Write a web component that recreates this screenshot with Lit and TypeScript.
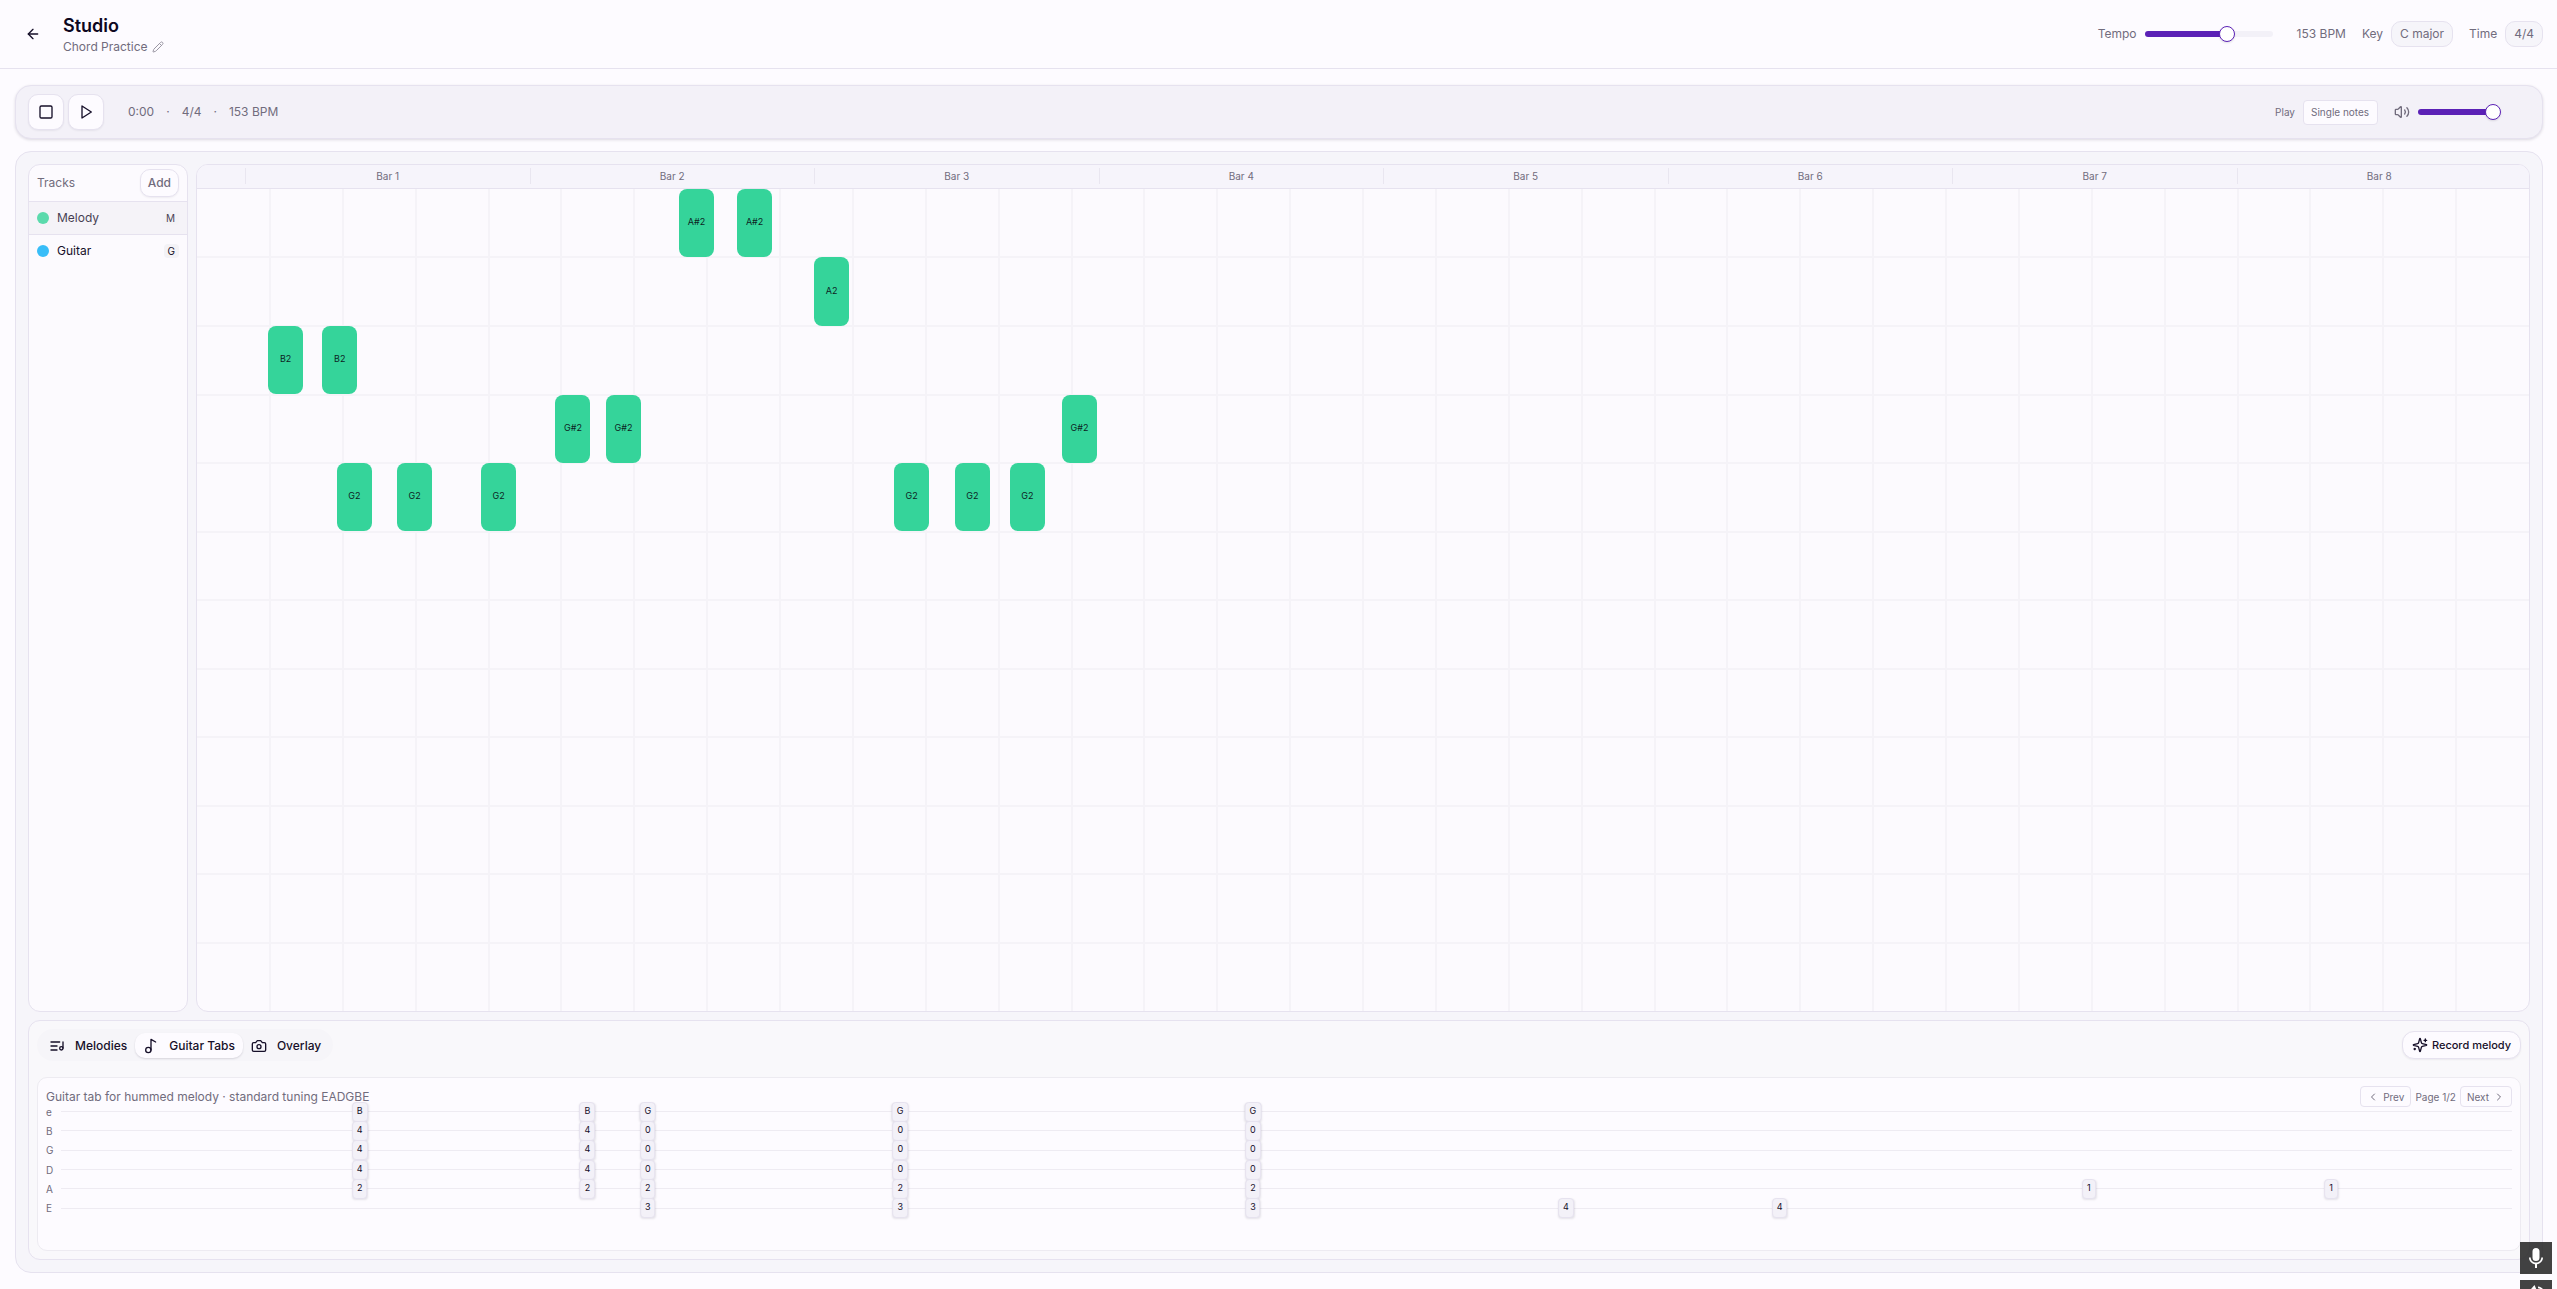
import { LitElement, html, css, svg, type TemplateResult } from 'lit';
import { customElement, state } from 'lit/decorators.js';
import { styleMap } from 'lit/directives/style-map.js';
import { classMap } from 'lit/directives/class-map.js';

interface Note { name: string; row: number; start: number; }
interface Track { name: string; key: string; color: string; }
interface Fret { at: number; frets: string[]; }

/* start is a share of the visible timeline, row counts from the top */
const NOTES: Note[] = [
  { name: 'A#2', row: 0, start: 20.67 },
  { name: 'A#2', row: 0, start: 23.16 },
  { name: 'A2', row: 1, start: 26.46 },
  { name: 'B2', row: 2, start: 3.05 },
  { name: 'B2', row: 2, start: 5.37 },
  { name: 'G#2', row: 3, start: 15.37 },
  { name: 'G#2', row: 3, start: 17.54 },
  { name: 'G#2', row: 3, start: 37.09 },
  { name: 'G2', row: 4, start: 6.0 },
  { name: 'G2', row: 4, start: 8.58 },
  { name: 'G2', row: 4, start: 12.18 },
  { name: 'G2', row: 4, start: 29.89 },
  { name: 'G2', row: 4, start: 32.5 },
  { name: 'G2', row: 4, start: 34.86 },
];

const TRACKS: Track[] = [
  { name: 'Melody', key: 'M', color: '#34d399' },
  { name: 'Guitar', key: 'G', color: '#38bdf8' },
];

const STRINGS = ['e', 'B', 'G', 'D', 'A', 'E'];

/* one entry per column, frets listed from the high e string down */
const FRETS: Fret[] = [
  { at: 12.19, frets: ['B', '4', '4', '4', '2', ''] },
  { at: 21.48, frets: ['B', '4', '4', '4', '2', ''] },
  { at: 23.94, frets: ['G', '0', '0', '0', '2', '3'] },
  { at: 34.24, frets: ['G', '0', '0', '0', '2', '3'] },
  { at: 48.63, frets: ['G', '0', '0', '0', '2', '3'] },
  { at: 61.4, frets: ['', '', '', '', '', '4'] },
  { at: 70.12, frets: ['', '', '', '', '', '4'] },
  { at: 82.74, frets: ['', '', '', '', '1', ''] },
  { at: 92.62, frets: ['', '', '', '', '1', ''] },
];

const ROWS = 12;
const COLS = 32;

const shapes = {
  back: svg`<path d="m12 19-7-7 7-7"/><path d="M19 12H5"/>`,
  pencil: svg`<path d="M21.174 6.812a1 1 0 0 0-3.986-3.987L3.842 16.174a2 2 0 0 0-.5.83l-1.321 4.352a.5.5 0 0 0 .623.622l4.353-1.32a2 2 0 0 0 .83-.497z"/><path d="m15 5 4 4"/>`,
  stop: svg`<rect x="3" y="3" width="18" height="18" rx="2"/>`,
  play: svg`<path d="M6 3 20 12 6 21z"/>`,
  volume: svg`<path d="M11 4.702a.705.705 0 0 0-1.203-.498L6.413 7.587A1.4 1.4 0 0 1 5.416 8H3a1 1 0 0 0-1 1v6a1 1 0 0 0 1 1h2.416a1.4 1.4 0 0 1 .997.413l3.383 3.384A.705.705 0 0 0 11 19.298z"/><path d="M16 9a5 5 0 0 1 0 6"/><path d="M19.364 18.364a9 9 0 0 0 0-12.728"/>`,
  list: svg`<path d="M21 15V6"/><circle cx="18.5" cy="15.5" r="2.5"/><path d="M12 12H3"/><path d="M16 6H3"/><path d="M12 18H3"/>`,
  music: svg`<circle cx="8" cy="18" r="4"/><path d="M12 18V2l7 4"/>`,
  camera: svg`<path d="M14.5 4h-5L7 7H4a2 2 0 0 0-2 2v9a2 2 0 0 0 2 2h16a2 2 0 0 0 2-2V9a2 2 0 0 0-2-2h-3z"/><circle cx="12" cy="13" r="3"/>`,
  sparkles: svg`<path d="M9.937 15.5A2 2 0 0 0 8.5 14.063l-6.135-1.582a.5.5 0 0 1 0-.962L8.5 9.936A2 2 0 0 0 9.937 8.5l1.582-6.135a.5.5 0 0 1 .963 0L14.063 8.5A2 2 0 0 0 15.5 9.937l6.135 1.581a.5.5 0 0 1 0 .964L15.5 14.063a2 2 0 0 0-1.437 1.437l-1.582 6.135a.5.5 0 0 1-.963 0z"/><path d="M20 3v4"/><path d="M22 5h-4"/><path d="M4 17v2"/><path d="M5 18H3"/>`,
  left: svg`<path d="m15 18-6-6 6-6"/>`,
  right: svg`<path d="m9 18 6-6-6-6"/>`,
};

const icon = (shape: unknown, size = 16, width = 2): TemplateResult => html`
  <svg width=${size} height=${size} viewBox="0 0 24 24" fill="none" stroke="currentColor"
    stroke-width=${width} stroke-linecap="round" stroke-linejoin="round" aria-hidden="true">${shape}</svg>`;

@customElement('app-root')
export class AppRoot extends LitElement {
  @state() private tempo = 153;
  @state() private volume = 70;
  @state() private tab = 'Guitar Tabs';

  static styles = css`
    :host {
      --bg: #fdfbff;
      --line: #e6e2ef;
      --soft: #f3f1f8;
      --ink: #160f29;
      --muted: #716c7d;
      --accent: #5b21b6;
      display: block;
      font-family: Inter, 'Liberation Sans', sans-serif;
      font-size: 12px;
      line-height: 16px;
      color: var(--muted);
      background: var(--bg);
    }
    *, *::before { box-sizing: border-box; }
    button, select, input { font: inherit; color: inherit; margin: 0; }
    button { cursor: pointer; display: flex; align-items: center; justify-content: center; padding: 0; border: 0; background: none; }
    svg { display: block; flex: none; }
    h1, p { margin: 0; }

    .page { display: flex; flex-direction: column; min-height: 100vh; }

    .top { display: flex; align-items: center; justify-content: space-between; height: 69px; padding: 0 14px 0 15px; border-bottom: 1px solid var(--line); }
    .brand, .settings, .field { display: flex; align-items: center; }
    .brand { gap: 12px; }
    .back { width: 36px; height: 36px; color: var(--ink); }
    .title { padding-top: 2px; font-size: 18px; line-height: 24px; font-weight: 600; color: #0d0720; }
    .project { display: flex; align-items: center; gap: 4px; line-height: 18px; }
    .rename { color: #9a96a3; }
    .settings { gap: 16px; }
    .field { gap: 8px; }
    .bpm { padding-left: 8px; }
    .pill { padding: 4px 8px; border: 1px solid var(--line); border-radius: 10px; background: #f6f5fa; }

    .slider { appearance: none; display: block; height: 16px; background: none; cursor: pointer; }
    .slider::-webkit-slider-runnable-track { height: 6px; border-radius: 3px; background: linear-gradient(to right, var(--accent) var(--fill), var(--soft) var(--fill)); }
    .slider::-webkit-slider-thumb { appearance: none; width: 16px; height: 16px; margin-top: -5px; border: 1px solid var(--accent); border-radius: 50%; background: #fff; box-shadow: 0 1px 2px rgba(22, 15, 41, 0.12); }
    .tempo { width: 128px; }
    .volume { width: 112px; }

    .body { flex: 1; display: flex; flex-direction: column; gap: 12px; padding: 16px 14px 16px 15px; }
    .transport { display: flex; align-items: center; gap: 4px; padding: 8px 12px; border: 1px solid var(--line); border-radius: 16px; background: var(--soft); box-shadow: 0 1px 3px rgba(22, 15, 41, 0.14); }
    .square { width: 36px; height: 36px; border: 1px solid var(--line); border-radius: 10px; background: var(--bg); color: var(--ink); box-shadow: 0 1px 2px rgba(22, 15, 41, 0.06); }
    .status { display: flex; gap: 12px; padding-left: 20px; }
    .grow { flex: 1; }
    .mode { font-size: 10px; padding-right: 12px; }
    .select { appearance: none; height: 25px; padding: 0 7px; border: 1px solid var(--line); border-radius: 4px; background: var(--bg); }

    .studio { flex: 1; display: flex; flex-direction: column; gap: 8px; padding: 12px; border: 1px solid var(--line); border-radius: 16px; background: #f6f5fa; }
    .upper { flex: 1; display: grid; grid-template-columns: 160px minmax(0, 1fr); gap: 8px; }
    .card { display: flex; flex-direction: column; border: 1px solid var(--line); border-radius: 12px; background: #fcfafe; overflow: hidden; }
    .head { display: flex; align-items: center; justify-content: space-between; padding: 4px 8px; border-bottom: 1px solid var(--line); }
    .add { height: 28px; padding: 0 7px; border: 1px solid var(--line); border-radius: 10px; background: var(--bg); font-weight: 500; box-shadow: 0 1px 2px rgba(22, 15, 41, 0.06); }
    .track { justify-content: flex-start; gap: 8px; width: 100%; height: 32px; padding: 0 8px; color: var(--ink); }
    .track.on { height: 33px; border-bottom: 1px solid var(--line); background: #f5f3f8; }
    .track.on > * { opacity: 0.8; }
    .dot { width: 12px; height: 12px; border-radius: 50%; }
    .name { flex: 1; text-align: left; }
    .key { padding: 0 4px; border-radius: 4px; background: #f3f2f6; font-size: 10px; line-height: 14px; }

    .bars { display: grid; grid-template-columns: repeat(8, 1fr); align-items: center; height: 24px; padding: 0 8px 1px 48px; border-bottom: 1px solid var(--line); background: #f6f4fb; font-size: 10px; }
    .bar { border-left: 1px solid #e9e6f0; line-height: 16px; text-align: center; }
    .roll { flex: 1; position: relative; }
    .lines { position: absolute; inset: 0; width: 100%; height: 100%; }
    .note { position: absolute; display: flex; align-items: center; justify-content: center; width: 35px; height: calc(100% / 12); padding-bottom: 2px; border-radius: 8px; background: #35d49a; color: #0d1f24; font-size: 9px; }

    .lower { display: flex; flex-direction: column; gap: 16px; padding: 8px; border: 1px solid var(--line); border-radius: 12px; background: #f9f8fb; }
    .bench { display: flex; align-items: center; justify-content: space-between; }
    .tabs { display: flex; padding: 4px 4px 3px; border-radius: 16px; background: #f6f5f9; }
    .tab { gap: 10px; height: 25px; padding: 0 8px; border-radius: 10px; color: var(--ink); font-weight: 500; }
    .tab.on { background: var(--bg); box-shadow: 0 1px 2px rgba(22, 15, 41, 0.14); }
    .record { gap: 4px; height: 28px; padding: 0 9px; border: 1px solid var(--line); border-radius: 12px; background: var(--bg); color: var(--ink); font-size: 11px; font-weight: 500; box-shadow: 0 1px 2px rgba(22, 15, 41, 0.06); }
    .sheet { min-height: 174px; padding: 8px; border: 1px solid #edebf1; border-radius: 10px; background: var(--bg); }
    .caption { display: flex; align-items: center; justify-content: space-between; height: 21px; }
    .pager { display: flex; align-items: center; gap: 4px; font-size: 10px; }
    .step { gap: 4px; height: 21px; padding: 0 6px; border: 1px solid var(--line); border-radius: 4px; }

    .strings { display: grid; grid-template-rows: repeat(6, 1fr); height: 116px; margin-top: -5px; }
    .string { display: grid; grid-template-columns: 15px minmax(0, 1fr); align-items: center; min-height: 0; font-size: 10px; }
    .neck { position: relative; display: flex; align-items: center; height: 18px; }
    .neck::before { content: ''; flex: 1; height: 1px; background: #eeebf2; }
    .fret { position: absolute; top: -1px; transform: translateX(-50%); height: 20px; padding: 0 4px; border: 1px solid var(--line); border-radius: 4px; background: var(--soft); color: var(--ink); font-size: 9px; box-shadow: 0 1px 2px rgba(22, 15, 41, 0.1); }

    .widgets { position: fixed; right: 5px; bottom: -23px; display: flex; flex-direction: column; gap: 6px; }
    .widget { width: 32px; height: 32px; background: rgba(40, 40, 40, 0.88); color: #fff; }
  `;

  private fill(value: number, min: number, max: number, width: number) {
    const share = (value - min) / (max - min);
    return styleMap({ '--fill': `${8 + share * (width - 16)}px` });
  }

  private roll() {
    return html`
      <div class="roll">
        <svg class="lines" stroke="#f5f3f8" stroke-width="2" shape-rendering="crispEdges" aria-hidden="true">
          ${Array.from({ length: COLS - 1 }, (_, i) => {
            const x = `${((i + 1) * 100) / COLS}%`;
            return svg`<line x1=${x} x2=${x} y1="0" y2="100%"/>`;
          })}
          ${Array.from({ length: ROWS - 1 }, (_, i) => {
            const y = `${((i + 1) * 100) / ROWS}%`;
            return svg`<line x1="0" x2="100%" y1=${y} y2=${y}/>`;
          })}
        </svg>
        ${NOTES.map((n) => html`<div class="note"
          style=${styleMap({ left: `${n.start}%`, top: `${(n.row * 100) / ROWS}%` })}>${n.name}</div>`)}
      </div>`;
  }

  render() {
    const tabs: [string, unknown][] = [['Melodies', shapes.list], ['Guitar Tabs', shapes.music], ['Overlay', shapes.camera]];
    return html`
      <div class="page">
        <header class="top">
          <div class="brand">
            <button class="back" aria-label="Back">${icon(shapes.back)}</button>
            <div>
              <h1 class="title">Studio</h1>
              <div class="project">Chord Practice
                <button class="rename" aria-label="Rename project">${icon(shapes.pencil, 12)}</button>
              </div>
            </div>
          </div>
          <div class="settings">
            <div class="field">
              <label for="tempo">Tempo</label>
              <input id="tempo" class="slider tempo" type="range" min="60" max="200" .value=${String(this.tempo)}
                style=${this.fill(this.tempo, 60, 200, 128)}
                @input=${(e: Event) => { this.tempo = Number((e.target as HTMLInputElement).value); }}>
            </div>
            <span class="bpm">${this.tempo} BPM</span>
            <div class="field"><span>Key</span><span class="pill">C major</span></div>
            <div class="field"><span>Time</span><span class="pill">4/4</span></div>
          </div>
        </header>

        <main class="body">
          <section class="transport">
            <button class="square" aria-label="Stop">${icon(shapes.stop)}</button>
            <button class="square" aria-label="Play">${icon(shapes.play)}</button>
            <div class="status"><span>0:00</span><span>·</span><span>4/4</span><span>·</span><span>${this.tempo} BPM</span></div>
            <div class="grow"></div>
            <div class="field mode">
              <label for="mode">Play</label>
              <select id="mode" class="select"><option>Single notes</option><option>Chords</option></select>
            </div>
            <div class="field">
              ${icon(shapes.volume)}
              <input class="slider volume" type="range" min="0" max="100" aria-label="Volume" .value=${String(this.volume)}
                style=${this.fill(this.volume, 0, 100, 112)}
                @input=${(e: Event) => { this.volume = Number((e.target as HTMLInputElement).value); }}>
            </div>
          </section>

          <section class="studio">
            <div class="upper">
              <aside class="card">
                <div class="head"><span>Tracks</span><button class="add">Add</button></div>
                ${TRACKS.map((t, i) => html`
                  <button class=${classMap({ track: true, on: i === 0 })}>
                    <span class="dot" style=${styleMap({ background: t.color })}></span>
                    <span class="name">${t.name}</span>
                    <span class="key">${t.key}</span>
                  </button>`)}
              </aside>
              <div class="card">
                <div class="bars">${Array.from({ length: 8 }, (_, i) => html`<div class="bar">Bar ${i + 1}</div>`)}</div>
                ${this.roll()}
              </div>
            </div>

            <div class="lower">
              <div class="bench">
                <div class="tabs" role="tablist">
                  ${tabs.map(([name, shape]) => html`
                    <button role="tab" aria-selected=${this.tab === name ? 'true' : 'false'}
                      class=${classMap({ tab: true, on: this.tab === name })}
                      @click=${() => { this.tab = name; }}>${icon(shape)}${name}</button>`)}
                </div>
                <button class="record">${icon(shapes.sparkles)}Record melody</button>
              </div>
              <div class="sheet">
                <div class="caption">
                  <p>Guitar tab for hummed melody · standard tuning EADGBE</p>
                  <div class="pager">
                    <button class="step">${icon(shapes.left, 12)}Prev</button>
                    <span>Page 1/2</span>
                    <button class="step">Next${icon(shapes.right, 12)}</button>
                  </div>
                </div>
                <div class="strings">
                  ${STRINGS.map((s, row) => html`
                    <div class="string"><span>${s}</span>
                      <div class="neck">
                        ${FRETS.filter((f) => f.frets[row]).map((f) => html`<span class="fret"
                          style=${styleMap({ left: `${f.at}%` })}>${f.frets[row]}</span>`)}
                      </div>
                    </div>`)}
                </div>
              </div>
            </div>
          </section>
        </main>

        <div class="widgets">
          <button class="widget" aria-label="Microphone">
            <svg width="24" height="24" viewBox="0 0 24 24" fill="currentColor" aria-hidden="true"><path d="M12 15a3.500 3.500 0 0 0 3.500-3.500v-6a3.500 3.500 0 0 0-7 0v6A3.500 3.500 0 0 0 12 15zm5.300-3.500c0 3-2.540 5.100-5.300 5.100s-5.300-2.100-5.300-5.100H5c0 3.410 2.720 6.230 6 6.720V22h2v-3.780c3.280-.48 6-3.300 6-6.720z"/></svg>
          </button>
          <button class="widget" aria-label="Effects">
            <svg width="24" height="24" viewBox="0 0 24 24" fill="currentColor" aria-hidden="true"><path d="m10.500 1 1.800 4.200 4.700 2.800-4.700 2.200L10 15l-2.200-4.800L4 8l3.500-3.500z"/><path d="M14 2.500c4 .5 6.500 3 6.500 7h-2c0-3-1.700-4.700-4.500-5.200z"/></svg>
          </button>
        </div>
      </div>`;
  }
}
